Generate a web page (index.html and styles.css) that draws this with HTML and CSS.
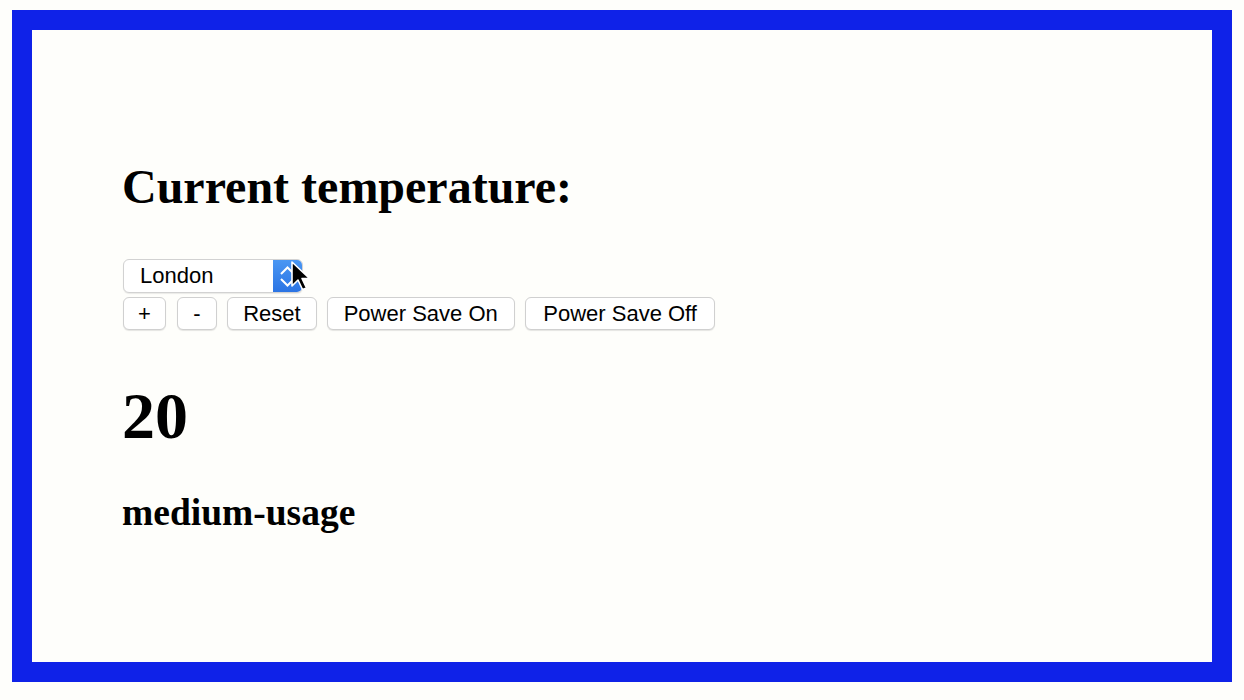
FILE: index.html
```html
<!DOCTYPE html>
<html>
<head>
<meta charset="utf-8">
<link rel="stylesheet" href="styles.css">
</head>
<body>
<div class="frame">
  <h1 class="title">Current temperature:</h1>
  <div class="select-wrap">
    <div class="select">
      <span class="select-text">London</span>
      <span class="select-arrow">
        <svg width="29" height="32" viewBox="0 0 29 32">
          <polyline points="8,14 14.5,7.5 21,14" fill="none" stroke="#fff" stroke-width="2"/>
          <polyline points="8,19 14.5,25.5 21,19" fill="none" stroke="#fff" stroke-width="2"/>
        </svg>
      </span>
    </div>
    <svg class="cursor" width="22" height="34" viewBox="0 0 22 34">
      <path d="M2,2 L2,26 L8,20 L12.5,29.5 L16.5,28 L12,18.5 L19.5,18.5 Z" fill="#000" stroke="#fff" stroke-width="1.6" stroke-linejoin="round"/>
    </svg>
  </div>
  <div class="buttons">
    <button class="btn btn-plus">+</button>
    <button class="btn btn-minus">-</button>
    <button class="btn">Reset</button>
    <button class="btn btn-wide">Power Save On</button>
    <button class="btn btn-wider">Power Save Off</button>
  </div>
  <h1 class="temp">20</h1>
  <h2 class="usage">medium-usage</h2>
</div>
</body>
</html>
```

FILE: styles.css
```css
html, body {
  margin: 0;
  padding: 0;
  background: #fefefb;
}
body {
  padding: 10px 12px;
  font-family: "Liberation Serif", "Times New Roman", serif;
}
.frame {
  box-sizing: border-box;
  width: 1220px;
  height: 672px;
  border: 20px solid #0f22e8;
  background: #fefefb;
  padding: 130px 90px 0 90px;
}
.title {
  margin: 0;
  font-size: 48px;
  line-height: 53px;
  font-weight: bold;
  color: #000;
}
.select-wrap {
  position: relative;
  margin-top: 46px;
  width: 180px;
  height: 34px;
  margin-left: 1px;
}
.select {
  box-sizing: border-box;
  display: flex;
  align-items: stretch;
  width: 180px;
  height: 34px;
  border: 1px solid #d2d2d2;
  border-radius: 6px;
  background: #fff;
  box-shadow: 0 1px 1px rgba(0,0,0,0.08);
  overflow: hidden;
  font-family: "Liberation Sans", Arial, sans-serif;
  font-size: 22px;
}
.select-text {
  flex: 1;
  padding-left: 16px;
  line-height: 32px;
  color: #000;
}
.select-arrow {
  width: 29px;
  background: linear-gradient(#4a97f3, #2b74e4);
  display: flex;
}
.cursor {
  position: absolute;
  left: 167px;
  top: 1px;
}
.buttons {
  display: flex;
  gap: 10px;
  margin-top: 4px;
  margin-left: 1px;
}
.btn {
  box-sizing: border-box;
  height: 33px;
  margin: 0;
  padding: 0 15px;
  border: 1px solid #d0d0d0;
  border-radius: 6px;
  background: #fff;
  box-shadow: 0 1px 1px rgba(0,0,0,0.1);
  font-family: "Liberation Sans", Arial, sans-serif;
  font-size: 22px;
  line-height: 31px;
  color: #000;
}
.btn-plus {
  padding: 0 14px;
}
.btn-minus {
  padding: 0 15.5px;
  margin-left: 1px;
}
.btn-wide {
  padding: 0 16px;
}
.btn-wider {
  padding: 0 17.5px;
}
.temp {
  margin: 49px 0 0 0;
  font-size: 66px;
  line-height: 73px;
  font-weight: bold;
}
.usage {
  margin: 40px 0 0 0;
  font-size: 37.5px;
  line-height: 41px;
  font-weight: bold;
}
```
